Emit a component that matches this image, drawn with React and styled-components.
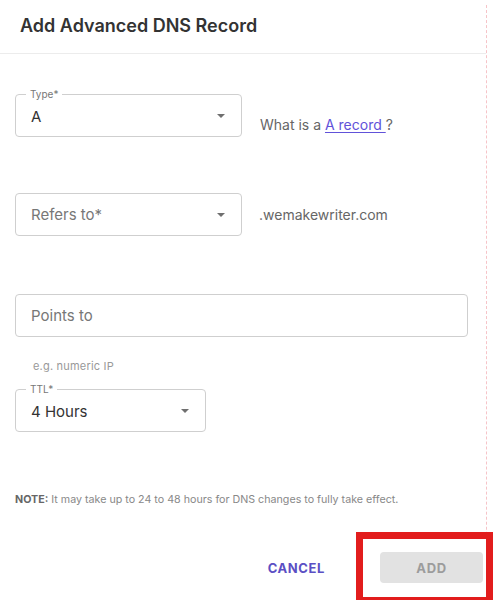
import React from "react";
import styled, { createGlobalStyle } from "styled-components";

const Global = createGlobalStyle`
  html, body { margin: 0; padding: 0; background: #fff; }
  body { font-family: Inter, "Noto Sans", sans-serif; }
  * { box-sizing: border-box; }
`;

const Page = styled.div`
  position: relative;
  width: 500px;
  height: 600px;
  background: #fff;
  overflow: hidden;
`;

const Header = styled.div`
  height: 54px;
  width: 486px;
  display: flex;
  align-items: center;
  padding: 0 0 2px 20px;
  border-bottom: 1px solid #ececec;
`;

const Title = styled.h1`
  margin: 0;
  font-size: 18px;
  font-weight: 600;
  color: #333;
  letter-spacing: 0px;
`;

const Body = styled.div`
  display: flex;
  flex-direction: column;
  padding-left: 15px;
  width: 486px;
`;

const Row = styled.div`
  display: flex;
  align-items: center;
  margin-top: ${(p) => p.$mt}px;
`;

const Field = styled.div`
  position: relative;
  width: ${(p) => p.$w}px;
  height: 43px;
  border: 1px solid #cfcfcf;
  border-radius: 4px;
  display: flex;
  align-items: center;
  padding: 0 13px 0 15px;
  justify-content: space-between;
`;

const FloatLabel = styled.span`
  position: absolute;
  top: -7px;
  left: 10px;
  padding: 0 4px;
  background: #fff;
  font-size: 10px;
  line-height: 12px;
  color: #777;
`;

const Value = styled.span`
  font-size: 15px;
  color: ${(p) => (p.$placeholder ? "#777" : "#333")};
  padding-top: ${(p) => (p.$placeholder ? 0 : 2)}px;
`;

const Arrow = styled.svg`
  width: 8px;
  height: 4px;
  margin-right: 3px;
  margin-top: 1px;
`;

const Side = styled.span`
  margin-left: ${(p) => p.$ml}px;
  font-size: 14px;
  color: #666;
  padding-top: ${(p) => p.$pt || 0}px;
`;

const Link = styled.a`
  color: #6152d9;
  text-decoration: underline;
  text-underline-offset: 2px;
`;

const Helper = styled.div`
  margin-top: 22px;
  margin-left: 18px;
  font-size: 11px;
  color: #999;
  letter-spacing: 0.2px;
`;

const Note = styled.div`
  margin-top: 61px;
  font-size: 10.7px;
  color: #888;
  & b {
    color: #666;
    font-weight: 700;
  }
`;

const Actions = styled.div`
  display: flex;
  justify-content: flex-end;
  align-items: center;
  margin-top: 46px;
  width: 468px;
  gap: 55px;
`;

const CancelBtn = styled.button`
  border: none;
  background: none;
  padding: 0;
  font-family: inherit;
  font-size: 13px;
  font-weight: 700;
  letter-spacing: 0.6px;
  color: #5b4fc4;
`;

const AddBtn = styled.button`
  width: 103px;
  height: 31px;
  border: none;
  border-radius: 4px;
  background: #e2e2e2;
  font-family: inherit;
  font-size: 13px;
  font-weight: 700;
  letter-spacing: 0.6px;
  color: #9c9c9c;
`;

const Highlight = styled.div`
  position: absolute;
  left: 356px;
  top: 532px;
  width: 137px;
  height: 72px;
  border: 7px solid #e21d1d;
  pointer-events: none;
`;

const GuideLine = styled.div`
  position: absolute;
  left: 486px;
  top: 5px;
  bottom: 0;
  border-left: 1px dashed #f6c4c8;
`;

const Caret = () => (
  <Arrow viewBox="0 0 8 4">
    <path d="M0 0 L8 0 L4 4 Z" fill="#6f6f6f" />
  </Arrow>
);

export default function App() {
  return (
    <Page>
      <Global />
      <Header>
        <Title>Add Advanced DNS Record</Title>
      </Header>
      <Body>
        <Row $mt={40}>
          <Field $w={227}>
            <FloatLabel>Type*</FloatLabel>
            <Value>A</Value>
            <Caret />
          </Field>
          <Side $ml={18} $pt={18}>
            What is a <Link href="#">A record </Link>?
          </Side>
        </Row>
        <Row $mt={56}>
          <Field $w={227}>
            <Value $placeholder>Refers to*</Value>
            <Caret />
          </Field>
          <Side $ml={17}>.wemakewriter.com</Side>
        </Row>
        <Row $mt={58}>
          <Field $w={453}>
            <Value $placeholder>Points to</Value>
          </Field>
        </Row>
        <Helper>e.g. numeric IP</Helper>
        <Row $mt={16}>
          <Field $w={191}>
            <FloatLabel>TTL*</FloatLabel>
            <Value>4 Hours</Value>
            <Caret />
          </Field>
        </Row>
        <Note>
          <b>NOTE:</b> It may take up to 24 to 48 hours for DNS changes to fully take effect.
        </Note>
        <Actions>
          <CancelBtn>CANCEL</CancelBtn>
          <AddBtn>ADD</AddBtn>
        </Actions>
      </Body>
      <GuideLine />
      <Highlight />
    </Page>
  );
}
